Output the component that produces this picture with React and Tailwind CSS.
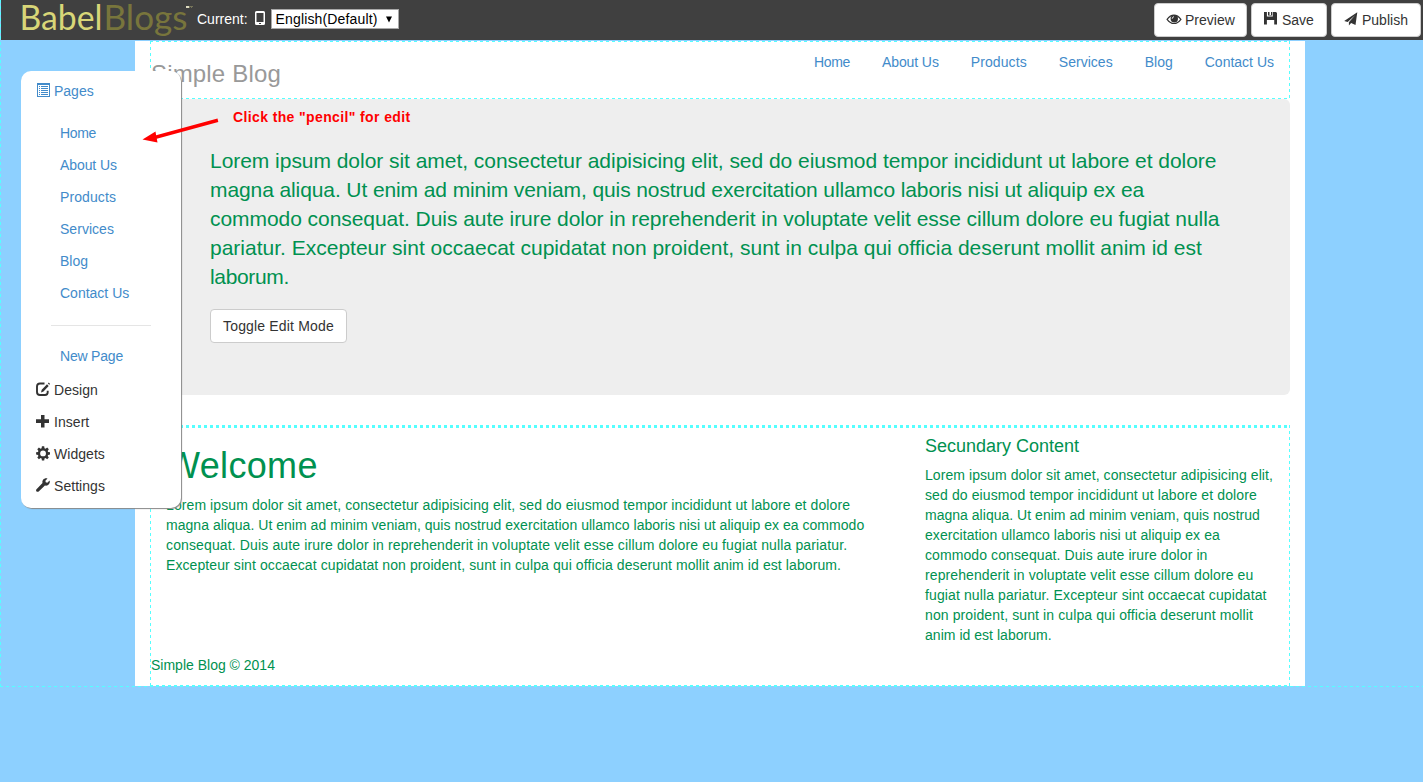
import React from "react";

const HERO = [
  ["Lorem ipsum dolor sit amet, consectetur adipisicing elit, sed do eiusmod tempor incididunt ut labore et dolore", "tracking-[-0.04px]"],
  ["magna aliqua. Ut enim ad minim veniam, quis nostrud exercitation ullamco laboris nisi ut aliquip ex ea", "tracking-[-0.1px]"],
  ["commodo consequat. Duis aute irure dolor in reprehenderit in voluptate velit esse cillum dolore eu fugiat nulla", "tracking-[-0.055px]"],
  ["pariatur. Excepteur sint occaecat cupidatat non proident, sunt in culpa qui officia deserunt mollit anim id est", ""],
  ["laborum.", "tracking-[-0.35px]"],
];

const ARTICLE = [
  ["Lorem ipsum dolor sit amet, consectetur adipisicing elit, sed do eiusmod tempor incididunt ut labore et dolore", "tracking-[0.092px]"],
  ["magna aliqua. Ut enim ad minim veniam, quis nostrud exercitation ullamco laboris nisi ut aliquip ex ea commodo", "tracking-[0.03px]"],
  ["consequat. Duis aute irure dolor in reprehenderit in voluptate velit esse cillum dolore eu fugiat nulla pariatur.", "tracking-[0.133px]"],
  ["Excepteur sint occaecat cupidatat non proident, sunt in culpa qui officia deserunt mollit anim id est laborum.", "tracking-[0.09px]"],
];

const ASIDE = [
  ["Lorem ipsum dolor sit amet, consectetur adipisicing elit,", "tracking-[0.07px]"],
  ["sed do eiusmod tempor incididunt ut labore et dolore", "tracking-[0.11px]"],
  ["magna aliqua. Ut enim ad minim veniam, quis nostrud", "tracking-[0.02px]"],
  ["exercitation ullamco laboris nisi ut aliquip ex ea", "tracking-[0.06px]"],
  ["commodo consequat. Duis aute irure dolor in", "tracking-[0.09px]"],
  ["reprehenderit in voluptate velit esse cillum dolore eu", "tracking-[0.1px]"],
  ["fugiat nulla pariatur. Excepteur sint occaecat cupidatat", "tracking-[0.11px]"],
  ["non proident, sunt in culpa qui officia deserunt mollit", "tracking-[0.11px]"],
  ["anim id est laborum.", "tracking-[0.03px]"],
];

const PAGES = [
  ["Home", "tracking-[-0.33px]"],
  ["About Us", "tracking-[-0.09px]"],
  ["Products", "tracking-[0.09px]"],
  ["Services", "tracking-[0.03px]"],
  ["Blog", ""],
  ["Contact Us", ""],
];

const DASH_X =
  "h-px bg-[repeating-linear-gradient(90deg,#5ff_0_3px,transparent_3px_6px)]";
const DASH_Y =
  "w-px bg-[repeating-linear-gradient(180deg,#5ff_0_3px,transparent_3px_6px)]";

function Lines({ rows, className = "" }) {
  return (
    <p className={`whitespace-nowrap ${className}`}>
      {rows.map(([text, tracking]) => (
        <span key={text} className={`block ${tracking}`}>
          {text}
        </span>
      ))}
    </p>
  );
}

function Icon({ children, className = "" }) {
  return (
    <svg
      width="14"
      height="14"
      viewBox="0 0 14 14"
      fill="currentColor"
      className={`shrink-0 overflow-visible ${className}`}
    >
      {children}
    </svg>
  );
}

const ListIcon = () => (
  <Icon>
    <path
      fillRule="evenodd"
      d="M1-1h13v14H1zM2 1v11h11V1zM3 2h1v1H3zM5 2h7v1H5zM3 4h1v1H3zM5 4h7v1H5zM3 6h1v1H3zM5 6h7v1H5zM3 8h1v1H3zM5 8h7v1H5zM3 10h1v1H3zM5 10h7v1H5z"
    />
  </Icon>
);
const EditIcon = () => (
  <Icon>
    <path
      d="M8.500.5H4Q1 .5 1 3.500v5.500Q1 12 4 12h5q2.700 0 2.700-2.700V7.800"
      fill="none"
      stroke="currentColor"
      strokeWidth="1.900"
    />
    <path d="M5 9.500l.7-2.700L11 1.300l1.700 1.700L7.500 8.500zM11.900.5l.9-.9 1.300 1.300-.9.900z" />
  </Icon>
);
const PlusIcon = () => (
  <Icon>
    <path d="M5 0h3.500v4.300H13v3.600H8.500V12.500H5V7.900H0V4.300h5z" />
  </Icon>
);
const CogIcon = () => (
  <Icon>
    <path
      fillRule="evenodd"
      d="M5.900-.7h2.300l.3 2 1 .4L11.200.6l1.600 1.600L11.700 4l.4 1 1.900.3v2.300l-1.900.3-.4 1 1.100 1.700-1.600 1.600-1.700-1.100-1 .4-.3 1.900H5.900l-.3-1.900-1-.4-1.700 1.100-1.600-1.600 1.100-1.700-.4-1L.1 7.600V5.300L2 5l.4-1L1.300 2.200 2.900.6l1.700 1.100 1-.4zM7.050 3.500a2.900 2.900 0 1 0 0 5.800 2.900 2.900 0 0 0 0-5.800z"
    />
  </Icon>
);
const WrenchIcon = () => (
  <Icon>
    <path d="M13.600 1.500L11.300 3.700l-1.600-.4-.3-1.500L11.500-.5C9.900-1 8.100-.5 7.100.8c-.7.9-.9 2-.6 3.100L.5 10.300c-.6.6-.6 1.500 0 2.100s1.500.6 2.200 0l6.200-5.800c1.200.3 2.500 0 3.500-.8 1.300-1.100 1.800-2.800 1.200-4.300z" />
  </Icon>
);
const EyeIcon = () => (
  <Icon>
    <path
      d="M.1 6.300Q3.200 2.100 7 2.100t6.900 4.200Q10.800 10.500 7 10.500T.1 6.300z"
      fill="none"
      stroke="currentColor"
      strokeWidth="1.200"
    />
    <circle cx="7.300" cy="5.800" r="3.700" />
    <path d="M5.200 5.700Q5.300 4 6.900 3.700" fill="none" stroke="#fff" strokeWidth="1" />
  </Icon>
);
const SaveIcon = () => (
  <Icon>
    <path d="M0-1h2.900v4.500h5.900V-1h3.200l1 1v11.500h-2.800V7H2.900v4.500H0z" />
    <path d="M4-1h1.500v3.500H4zM7-1h1.200v3.500H5.500V2H7z" />
  </Icon>
);
const SendIcon = () => (
  <Icon>
    <path d="M13.300-.8L.2 8l3.500.9L11 2.200 4.900 9.300v3.200l2.200-2.600 4.400 2z" />
  </Icon>
);

function ToolButton({ icon, width, children }) {
  return (
    <button
      className={`flex h-[34px] items-center gap-1 whitespace-nowrap rounded-[4px] border border-[#ccc] bg-white pl-3 leading-5 text-[#333] ${width}`}
    >
      {icon}
      <span>{children}</span>
    </button>
  );
}

function TopBar() {
  return (
    <header className="ml-px flex h-10 items-start justify-between bg-[#404040] text-white">
      <div className="flex items-start">
        <svg width="196" height="40" className="shrink-0 overflow-visible">
          <text x="18.500" y="29.500" fontFamily="Lato" fontSize="34" fill="#d8d678" textLength="83" lengthAdjust="spacingAndGlyphs">
            Babel
          </text>
          <text x="102.500" y="29.500" fontFamily="Lato" fontSize="34" fill="#78753c" textLength="84" lengthAdjust="spacingAndGlyphs">
            Blogs
          </text>
          <path d="M185 6h3v2h-3z" fill="#dddbc0" />
          <path d="M188 6h4v1h-1v1h-1V7h-1v1h-1z" fill="#77755a" />
        </svg>
        <span className="mt-[9px] leading-5">Current:</span>
        <svg width="10" height="14" viewBox="0 0 10 14" className="ml-[7px] mt-[11px]">
          <path
            fill="#fff"
            fillRule="evenodd"
            d="M1.500 0h7Q10 0 10 1.500v11Q10 14 8.500 14h-7Q0 14 0 12.500v-11Q0 0 1.500 0zM1.500 2v9h7V2zM4 12h2v1H4z"
          />
        </svg>
        <div className="ml-[6px] mt-[9px] flex h-5 w-[128px] items-center justify-between border border-[#a9a9a9] bg-white pl-[4px] pr-[5px] text-black">
          <span className="leading-5 tracking-[0.15px]">English(Default)</span>
          <svg width="8" height="7" viewBox="0 0 8 7">
            <path d="M1 .5h6L4 6.500z" />
          </svg>
        </div>
      </div>
      <div className="mr-[2px] mt-[3px] flex gap-1">
        <ToolButton width="w-[93px]" icon={<EyeIcon />}>
          Preview
        </ToolButton>
        <ToolButton width="w-[76px]" icon={<SaveIcon />}>
          Save
        </ToolButton>
        <ToolButton width="w-[90px]" icon={<SendIcon />}>
          Publish
        </ToolButton>
      </div>
    </header>
  );
}

function SideMenu() {
  const tools = [
    ["Design", <EditIcon />],
    ["Insert", <PlusIcon />],
    ["Widgets", <CogIcon />],
    ["Settings", <WrenchIcon />],
  ];
  return (
    <nav className="absolute left-[21px] top-[71px] z-10 h-[437px] w-[160px] rounded-[10px] bg-white pl-[15px] pt-[10px] shadow-[1px_1px_1px_#888]">
      <div className="flex h-5 items-center gap-1 text-[#428bca]">
        <ListIcon />
        <span>Pages</span>
      </div>
      <ul className="pl-6 pt-4 text-[#428bca]">
        {PAGES.map(([name, tracking]) => (
          <li key={name} className={`h-8 leading-8 ${tracking}`}>
            {name}
          </li>
        ))}
      </ul>
      <div className="ml-[15px] mt-4 h-px w-[100px] bg-[#e5e5e5]" />
      <div className="mt-[14px] h-8 pl-6 leading-8 tracking-[-0.2px] text-[#428bca]">New Page</div>
      <ul className="pt-[2px] text-[#333]">
        {tools.map(([name, icon]) => (
          <li key={name} className="flex h-8 items-center gap-1">
            {icon}
            <span className="tracking-[0.05px]">{name}</span>
          </li>
        ))}
      </ul>
    </nav>
  );
}

export default function App() {
  return (
    <div
      className="relative h-[782px] w-[1423px] overflow-hidden bg-[#8dd0ff] text-[14px] leading-5 text-[#009150]"
      style={{ fontFamily: '"Liberation Sans", Arial, sans-serif' }}
    >
      <TopBar />
      <SideMenu />
      <main className="ml-[135px] mt-px h-[645px] w-[1170px] bg-white px-[15px]">
        <div className="relative h-[58px]">
          <div className={`absolute left-0 top-0 w-full ${DASH_X}`} />
          <div className={`absolute bottom-0 left-0 w-full ${DASH_X}`} />
          <div className={`absolute left-0 top-0 h-full ${DASH_Y}`} />
          <div className={`absolute right-0 top-0 h-full ${DASH_Y}`} />
          <div className="flex justify-between pl-px pr-4">
            <h3 className="pt-[20px] text-[24px] leading-[26px] tracking-[0.17px] text-[#999]">Simple Blog</h3>
            <ul className="flex gap-8 pt-[11px] text-[#428bca]">
              {PAGES.map(([name, tracking]) => (
                <li key={name} className={tracking}>
                  {name}
                </li>
              ))}
            </ul>
          </div>
        </div>
        <section className="h-[296px] rounded-[6px] bg-[#eee] px-[60px] pt-[47px]">
          <Lines rows={HERO} className="text-[21px] leading-[29px]" />
          <button className="mt-[18px] flex h-[34px] w-[137px] items-center whitespace-nowrap rounded-[4px] border border-[#ccc] bg-white px-3 tracking-[0.17px] text-[#333]">
            Toggle Edit Mode
          </button>
        </section>
        <div className="relative mt-[30px] h-[261px]">
          <div className="absolute left-0 top-0 h-[3px] w-full bg-[repeating-linear-gradient(90deg,#5ff_0_3px,transparent_3px_6px)]" />
          <div className={`absolute bottom-0 left-0 w-full ${DASH_X}`} />
          <div className={`absolute left-0 top-0 h-full ${DASH_Y}`} />
          <div className={`absolute right-0 top-0 h-full ${DASH_Y}`} />
          <div className="flex h-[230px] pl-4">
            <article className="w-[759px] pt-[21px]">
              <h1 className="text-[36px] leading-10 tracking-[0.35px]">Welcome</h1>
              <Lines rows={ARTICLE} className="pt-[9px]" />
            </article>
            <aside className="w-[350px] pt-[11px]">
              <h4 className="text-[18px] leading-5">Secundary Content</h4>
              <Lines rows={ASIDE} className="pt-[9px]" />
            </aside>
          </div>
          <footer className="pl-px">Simple Blog © 2014</footer>
        </div>
      </main>
      <div className={`absolute left-0 top-0 h-[686px] ${DASH_Y}`} />
      <div className={`absolute left-0 top-[686px] w-full ${DASH_X}`} />
      <div className="absolute left-[233px] top-[107px] whitespace-nowrap text-[14px] font-bold tracking-[0.38px] text-[#f00]">
        Click the "pencil" for edit
      </div>
      <svg className="absolute left-[140px] top-[115px] z-20" width="80" height="30">
        <path d="M2.500 24.500l13-8 .6 3.700L77.500 3.500l.8 3.500-61.500 16.800.7 3.700z" fill="#f00" />
      </svg>
    </div>
  );
}
